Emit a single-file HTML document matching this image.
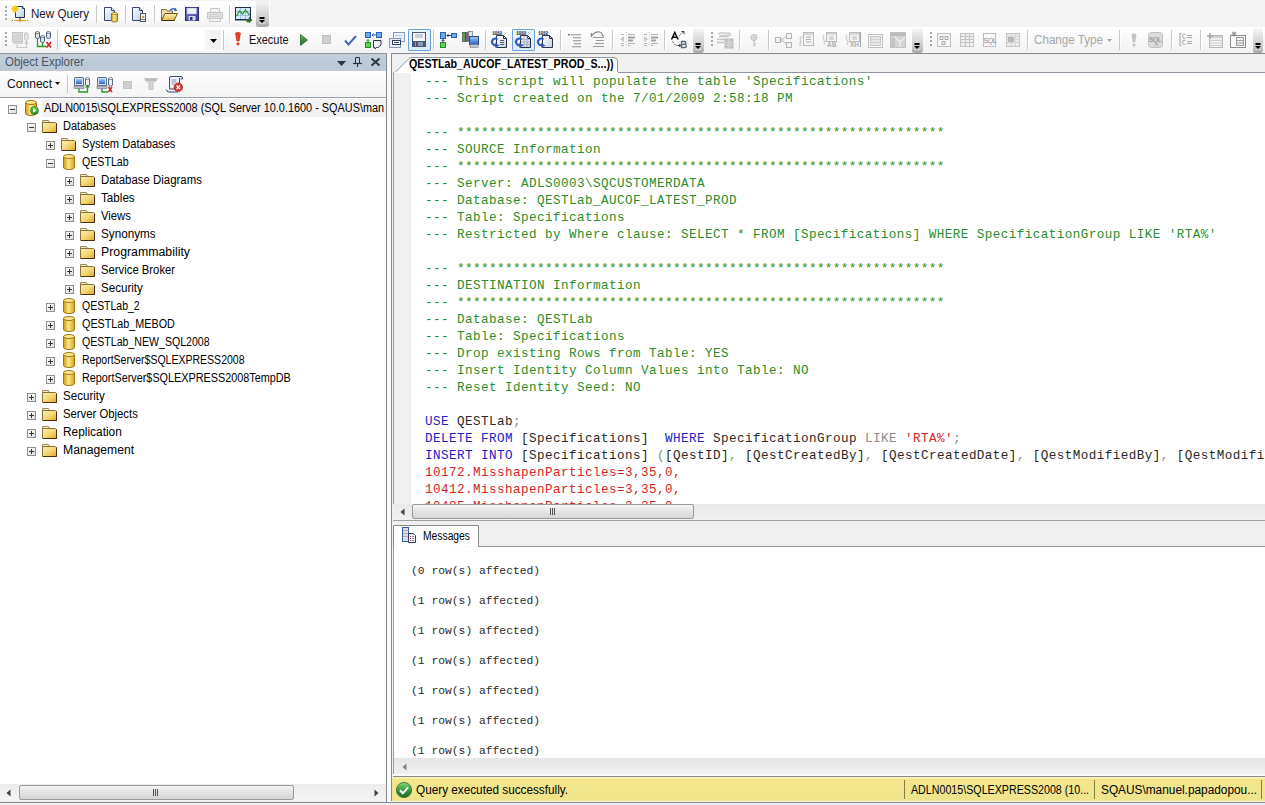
<!DOCTYPE html>
<html><head><meta charset="utf-8">
<style>
*{margin:0;padding:0;box-sizing:border-box}
html,body{width:1265px;height:805px;overflow:hidden;background:#f0f0f0;font-family:"Liberation Sans",sans-serif;font-size:12px;color:#000;position:relative}
.a{position:absolute}
.t{position:absolute;white-space:pre}
svg.a{overflow:visible}
.cl{position:absolute;left:425px;font-family:"Liberation Mono",monospace;font-size:12.6px;letter-spacing:0.44px;height:17px;line-height:17px;white-space:pre;color:#000}
.ml{position:absolute;left:411px;font-family:"Liberation Mono",monospace;font-size:11.333px;height:15px;line-height:15px;white-space:pre;color:#2a2a2a}
</style></head><body>
<svg width="0" height="0" style="position:absolute"><defs>
<linearGradient id="gy" x1="0" x2="1"><stop offset="0" stop-color="#d19a10"/><stop offset=".45" stop-color="#fde68a"/><stop offset="1" stop-color="#d7a31c"/></linearGradient>
<linearGradient id="gf" x1="0" y1="0" x2="0" y2="1"><stop offset="0" stop-color="#fff3c0"/><stop offset="1" stop-color="#e4b840"/></linearGradient><linearGradient id="gf2" x1="0" y1="0" x2="1" y2="1"><stop offset="0" stop-color="#fbf0b8"/><stop offset=".5" stop-color="#f4d878"/><stop offset="1" stop-color="#e0a828"/></linearGradient>
<linearGradient id="gdoc" x1="0" y1="0" x2="1" y2="1"><stop offset="0" stop-color="#ffffff"/><stop offset="1" stop-color="#b8cce8"/></linearGradient><linearGradient id="gfl" x1="0" y1="0" x2="1" y2="1"><stop offset="0" stop-color="#7a7ad8"/><stop offset="1" stop-color="#3a3a98"/></linearGradient><linearGradient id="gpl" x1="0" y1="0" x2="0" y2="1"><stop offset="0" stop-color="#6ab86a"/><stop offset="1" stop-color="#1e6a1e"/></linearGradient><linearGradient id="gchk" x1="0" y1="0" x2="0" y2="1"><stop offset="0" stop-color="#8ad87a"/><stop offset=".5" stop-color="#3a9a3a"/><stop offset="1" stop-color="#1a6a1a"/></linearGradient><linearGradient id="gdoc2" x1="0" y1="0" x2="1" y2="1"><stop offset="0" stop-color="#ffffff"/><stop offset="1" stop-color="#c8d0e0"/></linearGradient><linearGradient id="gb" x1="0" y1="0" x2="0" y2="1"><stop offset="0" stop-color="#9cc8f8"/><stop offset="1" stop-color="#2a62c8"/></linearGradient>
<linearGradient id="gg" x1="0" y1="0" x2="0" y2="1"><stop offset="0" stop-color="#7ed05a"/><stop offset="1" stop-color="#1f8a1f"/></linearGradient>
</defs></svg>
<div class="a" style="left:0px;top:0px;width:1265px;height:27px;background:#f3f3f3"></div>
<div class="a" style="left:0px;top:1px;width:270px;height:26px;background:linear-gradient(#fdfdfd,#fafafa 70%,#f0f0f0);border-radius:0 0 3px 0"></div>
<svg class="a" style="left:5px;top:6px" width="3" height="15" viewBox="0 0 3 15"><rect x="0" y="0" width="2" height="2" fill="#a8a8a8"/><rect x="0" y="4" width="2" height="2" fill="#a8a8a8"/><rect x="0" y="8" width="2" height="2" fill="#a8a8a8"/><rect x="0" y="12" width="2" height="2" fill="#a8a8a8"/></svg>
<svg class="a" style="left:11px;top:5px" width="18" height="17" viewBox="0 0 18 17"><path d="M4.5 1.5 h7 l2 2 v9 h-9z" fill="url(#gdoc)" stroke="#2a3450"/><path d="M11.5 1.5 v2 h2" fill="#fff" stroke="#2a3450"/><circle cx="4" cy="4" r="3" fill="#fde040"/><path d="M4 0v8M0 4h8M1.2 1.2l5.6 5.6M6.8 1.2l-5.6 5.6" stroke="#f4c000" stroke-width=".9"/><path d="M1 15.5 h16" stroke="#806010" stroke-width="1" stroke-dasharray="1 1.5"/><path d="M4 15.5h11" stroke="#e0a020" stroke-width="1.2"/><circle cx="9" cy="15.5" r="1.2" fill="#d09010"/><path d="M9 12.5v2" stroke="#2a3450"/></svg>
<div class="t" style="left:31px;top:6px;font-size:12px;line-height:16px;color:#1a1a2e;transform:scaleX(0.9664);transform-origin:0 0;">New Query</div>
<div class="a" style="left:96px;top:5px;width:1px;height:18px;background:#c8c8c8;border-right:1px solid #fff;width:2px;background-clip:content-box"></div>
<svg class="a" style="left:104px;top:7px" width="15" height="16" viewBox="0 0 15 16"><path d="M.5 .5 h7 l3 3 v10 h-10z" fill="url(#gdoc)" stroke="#3a4668"/><path d="M7.5 .5v3h3" fill="#fff" stroke="#3a4668"/><path d="M7.5 6.5 v7.5 a3 1 0 0 0 6 0 v-7.5" fill="url(#gy)" stroke="#9a7a20"/><ellipse cx="10.5" cy="6.5" rx="3" ry="1" fill="#fde68a" stroke="#9a7a20" stroke-width=".8"/></svg>
<div class="a" style="left:125px;top:5px;width:1px;height:18px;background:#c8c8c8;border-right:1px solid #fff;width:2px;background-clip:content-box"></div>
<svg class="a" style="left:132px;top:7px" width="15" height="16" viewBox="0 0 15 16"><path d="M.5 .5 h7 l3 3 v10 h-10z" fill="url(#gdoc)" stroke="#3a4668"/><path d="M7.5 .5v3h3" fill="#fff" stroke="#3a4668"/><rect x="8.5" y="6.5" width="5" height="8" fill="#f4f4f4" stroke="#505a6a"/><circle cx="11" cy="10" r="1.3" fill="#d0a030"/><path d="M9 12.5h4" stroke="#807050"/></svg>
<div class="a" style="left:154px;top:5px;width:1px;height:18px;background:#c8c8c8;border-right:1px solid #fff;width:2px;background-clip:content-box"></div>
<svg class="a" style="left:161px;top:7px" width="17" height="15" viewBox="0 0 17 15"><path d="M.5 13.5 v-11 h5 l1 1.5 h5 v3" fill="#ecdca8" stroke="#8a7438"/><path d="M.5 13.5 l3.5-7 h12.5 l-3.5 7z" fill="url(#gf)" stroke="#6a5418"/><path d="M1 13.5 h12.5" stroke="#3a2a08"/><path d="M9 3.5 q2.5-3 5.5-1" fill="none" stroke="#3a6ab8" stroke-width="1.4"/><path d="M14 .5 l2.5 3 l-3.5 .8z" fill="#3a6ab8"/></svg>
<svg class="a" style="left:185px;top:7px" width="14" height="14" viewBox="0 0 14 14"><rect x=".5" y=".5" width="13" height="13" fill="url(#gfl)" stroke="#2c2c78"/><rect x="2" y="1" width="9.5" height="6" fill="#eef2ff" stroke="#9aa0d8" stroke-width=".5"/><rect x="3.5" y="9" width="7" height="4.5" fill="#d8dcf0"/><rect x="5" y="10" width="2.5" height="3" fill="#2c2c78"/></svg>
<svg class="a" style="left:207px;top:8px" width="16" height="14" viewBox="0 0 16 14"><path d="M3.5 .5 h9 v4 h-9z" fill="#f4f4f4" stroke="#c8c8c8"/><path d="M.5 4.5 h15 v6 h-15z" fill="#e2e2e2" stroke="#c4c4c4"/><path d="M2 6.5h12M2 8.5h12" stroke="#d0d0d0"/><path d="M2.5 10.5 h11 v3 h-11z" fill="#f4f4f4" stroke="#c8c8c8"/></svg>
<div class="a" style="left:229px;top:5px;width:1px;height:18px;background:#c8c8c8;border-right:1px solid #fff;width:2px;background-clip:content-box"></div>
<svg class="a" style="left:235px;top:7px" width="18" height="16" viewBox="0 0 18 16"><rect x=".5" y=".5" width="15" height="12" fill="#d8ecf8" stroke="#1e2c50"/><path d="M1 4.5h14M1 8.5h14M5.5 1v11M10.5 1v11" stroke="#8ab0d8" stroke-width=".7"/><path d="M1.5 9 l3-5 l3 3 l3-4 l4 5" fill="none" stroke="#2a9a2a" stroke-width="1.3"/><rect x="0" y="12" width="16" height="1.5" fill="#1e2c50"/><path d="M14.5 10 v4.5 h-3 M12 12.5 l2.5 2.5 l2.5-2.5" fill="none" stroke="#2a7a1a" stroke-width="1.4"/></svg>
<div class="a" style="left:256px;top:0px;width:13px;height:27px;background:linear-gradient(rgba(235,235,235,0.3),#e0e0e0 35%,#c8c8c8 75%,#a8a8a8);border-radius:0 0 3px 2px"></div>
<svg class="a" style="left:259px;top:17px" width="6" height="7" viewBox="0 0 6 7"><rect x=".5" y="0" width="5" height="2" fill="#000"/><path d="M0 3 H6 L3 6Z" fill="#000"/><path d="M0 6.5h6" stroke="#fff" stroke-width=".7" opacity=".6"/></svg>
<div class="a" style="left:0px;top:27px;width:1265px;height:26px;background:linear-gradient(#ffffff,#f9f9f9 40%,#f2f2f2);border-top:1px solid #fff"></div>
<svg class="a" style="left:5px;top:32px" width="3" height="15" viewBox="0 0 3 15"><rect x="0" y="0" width="2" height="2" fill="#a8a8a8"/><rect x="0" y="4" width="2" height="2" fill="#a8a8a8"/><rect x="0" y="8" width="2" height="2" fill="#a8a8a8"/><rect x="0" y="12" width="2" height="2" fill="#a8a8a8"/></svg>
<svg class="a" style="left:12px;top:32px" width="17" height="16" viewBox="0 0 17 16"><rect x=".5" y=".5" width="10" height="9" fill="#dcdcdc" stroke="#c4c4c4"/><path d="M2 3h7M2 5h7M2 7h7" stroke="#cacaca"/><rect x="1" y="10" width="10" height="2" fill="#d4d4d4"/><path d="M12.5 1.5v6a1.8 .8 0 0 0 3.6 0v-6" fill="#eaeaea" stroke="#c8c8c8"/><ellipse cx="14.3" cy="1.5" rx="1.8" ry=".8" fill="#f4f4f4" stroke="#c8c8c8"/><path d="M5 12.5v3h9.5v-5M12.8 11.5l1.7-1.8 1.7 1.8" fill="none" stroke="#c8c8c8" stroke-width="1.2"/></svg>
<svg class="a" style="left:35px;top:31px" width="17" height="18" viewBox="0 0 17 18"><path d="M.5 1.5v5a2 .9 0 0 0 4 0v-5" fill="#dde6f0" stroke="#4a5a78"/><ellipse cx="2.5" cy="1.5" rx="2" ry=".9" fill="#fff" stroke="#4a5a78" stroke-width=".8"/><path d="M5.5 5.5v5a2 .9 0 0 0 4 0v-5" fill="#dde6f0" stroke="#4a5a78"/><ellipse cx="7.5" cy="5.5" rx="2" ry=".9" fill="#fff" stroke="#4a5a78" stroke-width=".8"/><path d="M11.5 1.5v5a2 .9 0 0 0 4 0v-5" fill="#dde6f0" stroke="#4a5a78"/><ellipse cx="13.5" cy="1.5" rx="2" ry=".9" fill="#fff" stroke="#4a5a78" stroke-width=".8"/><path d="M2.5 8v7.5h9M7.5 12v3.5" fill="none" stroke="#2a9a2a" stroke-width="1.3"/><path d="M11.5 11l4.5 5.5M16 11l-4.5 5.5" stroke="#e02020" stroke-width="1.7"/></svg>
<div class="a" style="left:57px;top:30px;width:1px;height:20px;background:#c8c8c8;border-right:1px solid #fff;width:2px;background-clip:content-box"></div>
<div class="a" style="left:61px;top:29px;width:161px;height:22px;background:#fff"></div>
<div class="a" style="left:205px;top:30px;width:16px;height:20px;background:linear-gradient(90deg,#f8f8f8,#efefef)"></div>
<svg class="a" style="left:210px;top:39px" width="7" height="4" viewBox="0 0 7 4"><path d="M0 0h7l-3.5 4z" fill="#000"/></svg>
<div class="t" style="left:64px;top:32px;font-size:12px;line-height:16px;color:#000;transform:scaleX(0.8733);transform-origin:0 0;">QESTLab</div>
<div class="a" style="left:223px;top:30px;width:1px;height:20px;background:#c8c8c8;border-right:1px solid #fff;width:2px;background-clip:content-box"></div>
<svg class="a" style="left:234px;top:32px" width="8" height="14" viewBox="0 0 8 14"><path d="M1.5 1 q2.5-1.5 5 0 l-1.3 8 h-2.4z" fill="#e84020" stroke="#b02010" stroke-width=".5"/><circle cx="4" cy="11.8" r="1.6" fill="#e84020"/></svg>
<div class="t" style="left:249px;top:32px;font-size:12px;line-height:16px;color:#111;transform:scaleX(0.9113);transform-origin:0 0;">Execute</div>
<svg class="a" style="left:300px;top:34px" width="8" height="12" viewBox="0 0 8 12"><path d="M.5 .5 L7.5 6 L.5 11.5z" fill="url(#gpl)" stroke="#1e5a1e" stroke-width=".7"/></svg>
<svg class="a" style="left:322px;top:35px" width="9" height="9" viewBox="0 0 9 9"><rect x=".5" y=".5" width="8" height="8" fill="#d0d0d0" stroke="#c0c0c0"/></svg>
<svg class="a" style="left:344px;top:35px" width="13" height="11" viewBox="0 0 13 11"><path d="M1 5.5 l3.5 4 l7.5-8.5" fill="none" stroke="#4a64b0" stroke-width="2"/></svg>
<svg class="a" style="left:365px;top:32px" width="17" height="16" viewBox="0 0 17 16"><rect x=".5" y=".5" width="5" height="5" fill="#6aa8f0" stroke="#2a60b8"/><rect x="11.5" y=".5" width="5" height="5" fill="#6aa8f0" stroke="#2a60b8"/><path d="M7 3h4M8.5 1.5l-1.5 1.5 1.5 1.5" fill="none" stroke="#2a60b8"/><rect x=".5" y="10.5" width="5" height="5" fill="#60d050" stroke="#20902a"/><path d="M3 7.5v3M1.5 9 l1.5-1.5 1.5 1.5" fill="none" stroke="#20902a"/><path d="M8.5 8.5h7.5v4.5l-3 2.5h-1.5l-1.5 1.5v-1.5h-1.5z" fill="#f0f0f4" stroke="#303850"/></svg>
<svg class="a" style="left:389px;top:32px" width="16" height="16" viewBox="0 0 16 16"><rect x="4.5" y=".5" width="11" height="9" fill="#eef2fa" stroke="#8a98b8"/><path d="M6 3.5h8M6 6.5h8" stroke="#c0c8dc"/><rect x=".5" y="6.5" width="11" height="9" fill="#e8edf6" stroke="#8a98b8"/><rect x="3.5" y="8.5" width="8" height="4" fill="#f8f8fc" stroke="#303c60"/><path d="M5 10.5h5" stroke="#303c60"/></svg>
<div class="a" style="left:408px;top:29px;width:23px;height:22px;background:linear-gradient(#eef5fd,#dbe9f9);border:1px solid #6aa0e0;border-radius:1px"></div>
<svg class="a" style="left:412px;top:32px" width="15" height="15" viewBox="0 0 15 15"><rect x=".5" y=".5" width="13" height="14" fill="#f4f6fa" stroke="#48587a"/><path d="M3 3h8M3 5h8" stroke="#9aa4b8"/><rect x="1" y="9" width="12" height="5" fill="#48587a"/><path d="M3 11h1M6 11h5M3 13h1M6 13h5" stroke="#fff" stroke-width=".8"/></svg>
<div class="a" style="left:433px;top:30px;width:1px;height:20px;background:#c8c8c8;border-right:1px solid #fff;width:2px;background-clip:content-box"></div>
<svg class="a" style="left:440px;top:32px" width="17" height="16" viewBox="0 0 17 16"><rect x=".5" y=".5" width="5" height="6" fill="#6aa8f0" stroke="#2a60b8"/><rect x="11.5" y="1.5" width="5" height="4" fill="#6aa8f0" stroke="#2a60b8"/><path d="M7 3.5h4M8.5 2l-1.5 1.5 1.5 1.5" fill="none" stroke="#2a3a60"/><rect x=".5" y="10.5" width="5" height="5" fill="#60d050" stroke="#20902a"/><path d="M3 7.5v3M1.5 9 l1.5-1.5 1.5 1.5" fill="none" stroke="#2a3a60"/></svg>
<svg class="a" style="left:462px;top:31px" width="17" height="17" viewBox="0 0 17 17"><rect x=".5" y="1.5" width="3" height="9" fill="#58a048" stroke="#2a4a2a" stroke-width=".6"/><rect x="3.5" y="1.5" width="3" height="9" fill="#8a5aa0" stroke="#2a4a2a" stroke-width=".6"/><rect x="6.5" y=".5" width="4" height="9" fill="#e0e4ec" stroke="#505870" stroke-width=".6"/><rect x="7.5" y="5.5" width="9" height="8" fill="url(#gb)" stroke="#3a4a70"/><rect x="8" y="13.5" width="8" height="3" fill="#c0c8d4" stroke="#707890" stroke-width=".6"/></svg>
<div class="a" style="left:485px;top:30px;width:1px;height:20px;background:#c8c8c8;border-right:1px solid #fff;width:2px;background-clip:content-box"></div>
<svg class="a" style="left:491px;top:31px" width="17" height="17" viewBox="0 0 17 17"><text x="1" y="4.2" font-family="Liberation Mono" font-size="5" font-weight="bold" fill="#303848" letter-spacing="-.6">1010</text><path d="M5.5 4.5 h7 l3 3 v9 h-10z" fill="url(#gdoc2)" stroke="#2a3248"/><path d="M12.5 4.5v3h3" fill="none" stroke="#2a3248"/><path d="M9 9.5h4M9 11.5h4M9 13.5h4" stroke="#505870"/><path d="M6.5 8.5 a3.3 3.3 0 1 0 -1 5.5" fill="none" stroke="#2a5ac0" stroke-width="2"/><path d="M4 12 l4.5 2.5 -4.5 2.2z" fill="#2a5ac0"/><circle cx="3.8" cy="10.5" r="1" fill="#fff"/></svg>
<div class="a" style="left:512px;top:29px;width:23px;height:22px;background:linear-gradient(#eef5fd,#dbe9f9);border:1px solid #6aa0e0;border-radius:1px"></div>
<svg class="a" style="left:515px;top:31px" width="17" height="17" viewBox="0 0 17 17"><text x="1" y="4.2" font-family="Liberation Mono" font-size="5" font-weight="bold" fill="#303848" letter-spacing="-.6">1010</text><path d="M5.5 4.5 h7 l3 3 v9 h-10z" fill="url(#gdoc2)" stroke="#2a3248"/><path d="M12.5 4.5v3h3" fill="none" stroke="#2a3248"/><path d="M6 8.5h9M6 11h9M6 13.5h9M9 5v11M12 5v11" stroke="#9aa6c0" stroke-width=".8"/><path d="M6.5 8.5 a3.3 3.3 0 1 0 -1 5.5" fill="none" stroke="#2a5ac0" stroke-width="2"/><path d="M4 12 l4.5 2.5 -4.5 2.2z" fill="#2a5ac0"/><circle cx="3.8" cy="10.5" r="1" fill="#fff"/></svg>
<svg class="a" style="left:537px;top:31px" width="17" height="17" viewBox="0 0 17 17"><text x="1" y="4.2" font-family="Liberation Mono" font-size="5" font-weight="bold" fill="#303848" letter-spacing="-.6">1010</text><path d="M5.5 4.5 h7 l3 3 v9 h-10z" fill="url(#gdoc2)" stroke="#2a3248"/><path d="M12.5 4.5v3h3" fill="none" stroke="#2a3248"/><path d="M6.5 8.5 a3.3 3.3 0 1 0 -1 5.5" fill="none" stroke="#2a5ac0" stroke-width="2"/><path d="M4 12 l4.5 2.5 -4.5 2.2z" fill="#2a5ac0"/><circle cx="3.8" cy="10.5" r="1" fill="#fff"/></svg>
<div class="a" style="left:560px;top:30px;width:1px;height:20px;background:#c8c8c8;border-right:1px solid #fff;width:2px;background-clip:content-box"></div>
<svg class="a" style="left:567px;top:33px" width="15" height="15" viewBox="0 0 15 15"><rect x="1" y="1" width="2" height="1.4" fill="#707070"/><path d="M4 1.7h10M6 4.7h8M6 7.7h8M7 10.7h7M5 13.7h9" stroke="#909090" stroke-width="1.1"/></svg>
<svg class="a" style="left:591px;top:31px" width="14" height="17" viewBox="0 0 14 17"><path d="M1 4 l1.5-1 q2-2.5 6-2 q3 .5 3 4 h2" fill="none" stroke="#8a8a8a" stroke-width="1.2"/><path d="M.5 2v4" stroke="#8a8a8a" stroke-width="1.4"/><path d="M2 6.5h11M5 9.5h8M4 12.5h9M2 15.5h11" stroke="#9a9a9a" stroke-width="1.1"/></svg>
<div class="a" style="left:612px;top:30px;width:1px;height:20px;background:#c8c8c8;border-right:1px solid #fff;width:2px;background-clip:content-box"></div>
<svg class="a" style="left:619px;top:31px" width="17" height="17" viewBox="0 0 17 17"><path d="M7.5 1v14" stroke="#c8c8c8" stroke-dasharray="1 2"/><path d="M2 3.5h3M9 3.5h7M9 6.5h7M9 9.5h5M2 12.5h3M9 12.5h7M2 14.5h3M9 14.5h2" stroke="#b4b4b4" stroke-width="1.1"/><path d="M9 6.5h7M9 9.5h5" stroke="#a0a0a0" stroke-width="1.8"/><path d="M1 8 l4-3 v6z" fill="#c8c8c8"/></svg>
<svg class="a" style="left:642px;top:31px" width="17" height="17" viewBox="0 0 17 17"><path d="M7.5 1v14" stroke="#c8c8c8" stroke-dasharray="1 2"/><path d="M2 3.5h3M9 3.5h7M9 6.5h7M9 9.5h5M2 12.5h3M9 12.5h7M2 14.5h3M9 14.5h2" stroke="#b4b4b4" stroke-width="1.1"/><path d="M9 6.5h7M9 9.5h5" stroke="#a0a0a0" stroke-width="1.8"/><path d="M6 8 l-4-3 v6z" fill="#c8c8c8"/></svg>
<div class="a" style="left:664px;top:30px;width:1px;height:20px;background:#c8c8c8;border-right:1px solid #fff;width:2px;background-clip:content-box"></div>
<svg class="a" style="left:670px;top:30px" width="18" height="19" viewBox="0 0 18 19"><path d="M1.5 9.5 L4.8 2.5 L8.1 9.5M2.7 7.2h4.2" fill="none" stroke="#000" stroke-width="1.5"/><path d="M11.5 17.5V11.5h2.6q1.8 0 1.8 1.5 0 1.4-1.8 1.4h-2.6 2.9q2 0 2 1.55 0 1.55-2 1.55z" fill="none" stroke="#56657a" stroke-width="1.3"/><path d="M9.5 5.5 l1 -1 M11.5 3.5 l1-1" stroke="#303030" stroke-width="1"/><path d="M11.5 1.5h2.5v2.5" fill="none" stroke="#303030" stroke-width="1"/><path d="M2.5 11.5 l.8 1.2 M4.3 13.8 l1 1 M6.5 15.5 h1" stroke="#303030" stroke-width="1"/><path d="M8 15.5h2.5M9.3 14l1.5 1.5-1.5 1.5" fill="none" stroke="#303030" stroke-width="1"/></svg>
<div class="a" style="left:693px;top:28px;width:11px;height:25px;background:linear-gradient(rgba(235,235,235,0.3),#e0e0e0 35%,#c8c8c8 75%,#a8a8a8);border-radius:0 0 3px 2px"></div>
<svg class="a" style="left:695px;top:43px" width="6" height="7" viewBox="0 0 6 7"><rect x=".5" y="0" width="5" height="2" fill="#000"/><path d="M0 3 H6 L3 6Z" fill="#000"/><path d="M0 6.5h6" stroke="#fff" stroke-width=".7" opacity=".6"/></svg>
<svg class="a" style="left:711px;top:32px" width="3" height="15" viewBox="0 0 3 15"><rect x="0" y="0" width="2" height="2" fill="#a8a8a8"/><rect x="0" y="4" width="2" height="2" fill="#a8a8a8"/><rect x="0" y="8" width="2" height="2" fill="#a8a8a8"/><rect x="0" y="12" width="2" height="2" fill="#a8a8a8"/></svg>
<svg class="a" style="left:716px;top:32px" width="18" height="17" viewBox="0 0 18 17"><path d="M2 2 q2-2 5-1 h6 q2 0 1.5 2 l-1 1 h-9" fill="#e8e8e8" stroke="#bcbcbc"/><path d="M3 4.5h9M1 7.5h9M1 10.5h7" stroke="#c4c4c4" stroke-width="1.3"/><rect x="9" y="7" width="8" height="9" fill="#c4c4c4" stroke="#b8b8b8"/><path d="M9 10.5h8M9 13h8M13 7v9" stroke="#d8d8d8"/></svg>
<div class="a" style="left:739px;top:30px;width:1px;height:20px;background:#c8c8c8;border-right:1px solid #fff;width:2px;background-clip:content-box"></div>
<svg class="a" style="left:750px;top:34px" width="8" height="13" viewBox="0 0 8 13"><circle cx="4" cy="3.5" r="3" fill="#e0e0e0" stroke="#c0c0c0"/><circle cx="4" cy="3.5" r="1" fill="#c0c0c0"/><path d="M4 6.5v6M4 9.5h2M4 11.5h2" stroke="#c4c4c4" stroke-width="1.2"/></svg>
<div class="a" style="left:768px;top:30px;width:1px;height:20px;background:#c8c8c8;border-right:1px solid #fff;width:2px;background-clip:content-box"></div>
<svg class="a" style="left:775px;top:33px" width="17" height="15" viewBox="0 0 17 15"><rect x=".5" y="4.5" width="5" height="5" fill="#f4f4f4" stroke="#b4b4b4"/><rect x="11.5" y=".5" width="5" height="5" fill="#f4f4f4" stroke="#b4b4b4"/><rect x="11.5" y="9.5" width="5" height="5" fill="#f4f4f4" stroke="#b4b4b4"/><path d="M6 6.5 q3 0 5.5-3.5M6 7.5 q3 0 5.5 4" fill="none" stroke="#b4b4b4"/></svg>
<svg class="a" style="left:799px;top:32px" width="17" height="17" viewBox="0 0 17 17"><rect x="4.5" y=".5" width="10" height="13" fill="#f4f4f4" stroke="#bcbcbc"/><rect x="5" y="1" width="9" height="2" fill="#d8d8d8"/><path d="M7 5h5M7 7.5h5M7 10h5" stroke="#b0b0b0"/><path d="M3 4 q-3 3 -1 6 q-2 2 0 4" fill="none" stroke="#d0d0d0" stroke-width="1.5"/></svg>
<svg class="a" style="left:822px;top:32px" width="17" height="17" viewBox="0 0 17 17"><rect x="4.5" y=".5" width="10" height="9" fill="#f4f4f4" stroke="#bcbcbc"/><rect x="5" y="1" width="9" height="2" fill="#d8d8d8"/><path d="M7 5h5M7 7h5" stroke="#b8b8b8"/><text x="5" y="15" font-family="Liberation Sans" font-size="6.5" font-weight="bold" fill="#b0b0b0">AB</text><path d="M1.5 3 q-1 4 1.5 7 l-1 3" fill="none" stroke="#d4d4d4" stroke-width="1.5"/></svg>
<svg class="a" style="left:845px;top:32px" width="17" height="17" viewBox="0 0 17 17"><rect x="4.5" y=".5" width="10" height="9" fill="#f4f4f4" stroke="#bcbcbc"/><rect x="5" y="1" width="9" height="2" fill="#d8d8d8"/><path d="M7 5h5M7 7h5" stroke="#b8b8b8"/><text x="5" y="15" font-family="Liberation Sans" font-size="6.5" font-weight="bold" fill="#b0b0b0">XH</text><path d="M1.5 3 q-1 4 1.5 7 l-1 3" fill="none" stroke="#d4d4d4" stroke-width="1.5"/><path d="M15.5 0v15" stroke="#a8a8a8"/></svg>
<svg class="a" style="left:868px;top:34px" width="16" height="14" viewBox="0 0 16 14"><rect x=".5" y=".5" width="14" height="13" fill="#fafafa" stroke="#c0c0c0"/><rect x="2.5" y="2.5" width="10" height="9" fill="#e8e8e8" stroke="#c8c8c8"/><path d="M3 5.5h9M3 8.5h9" stroke="#d4d4d4"/></svg>
<svg class="a" style="left:890px;top:32px" width="16" height="16" viewBox="0 0 16 16"><rect x=".5" y=".5" width="15" height="15" fill="#d4d4d4" stroke="#c0c0c0"/><rect x="1" y="1" width="14" height="3" fill="#bcbcbc"/><path d="M5 5 l5 5 l5-5M10 10v5" stroke="#eeeeee" stroke-width="1.3" fill="none"/><rect x="1" y="6" width="4" height="9" fill="#c4c4c4"/></svg>
<div class="a" style="left:912px;top:28px;width:11px;height:25px;background:linear-gradient(rgba(235,235,235,0.3),#e0e0e0 35%,#c8c8c8 75%,#a8a8a8);border-radius:0 0 3px 2px"></div>
<svg class="a" style="left:914px;top:43px" width="6" height="7" viewBox="0 0 6 7"><rect x=".5" y="0" width="5" height="2" fill="#000"/><path d="M0 3 H6 L3 6Z" fill="#000"/><path d="M0 6.5h6" stroke="#fff" stroke-width=".7" opacity=".6"/></svg>
<svg class="a" style="left:930px;top:32px" width="3" height="15" viewBox="0 0 3 15"><rect x="0" y="0" width="2" height="2" fill="#a8a8a8"/><rect x="0" y="4" width="2" height="2" fill="#a8a8a8"/><rect x="0" y="8" width="2" height="2" fill="#a8a8a8"/><rect x="0" y="12" width="2" height="2" fill="#a8a8a8"/></svg>
<svg class="a" style="left:937px;top:33px" width="14" height="14" viewBox="0 0 14 14"><rect x=".5" y=".5" width="13" height="13" fill="#f6f6f6" stroke="#c0c0c0"/><path d="M3 3.5h3v3h-3zM8 3.5h3v3h-3zM5 8.5h3v3h-3z" fill="none" stroke="#a8a8a8"/></svg>
<svg class="a" style="left:960px;top:33px" width="14" height="14" viewBox="0 0 14 14"><rect x=".5" y=".5" width="13" height="13" fill="#f0f0f0" stroke="#c4c4c4"/><path d="M1 3.5h12M1 6.5h12M1 9.5h12M5.5 1v12M9.5 1v12" stroke="#c4c4c4"/></svg>
<svg class="a" style="left:983px;top:33px" width="14" height="14" viewBox="0 0 14 14"><rect x=".5" y=".5" width="12" height="13" fill="#f8f8f8" stroke="#bcbcbc"/><text x=".5" y="10" font-family="Liberation Sans" font-size="7" fill="#888" letter-spacing="-.4">SQL</text></svg>
<svg class="a" style="left:1006px;top:33px" width="14" height="14" viewBox="0 0 14 14"><rect x=".5" y=".5" width="13" height="13" fill="#eaeaea" stroke="#c4c4c4"/><path d="M1 3.5h12M1 6.5h12M1 9.5h12M5.5 1v12M9.5 1v12" stroke="#d4d4d4"/><rect x="2" y="4" width="6" height="5" fill="#b8b8b8"/></svg>
<div class="a" style="left:1027px;top:30px;width:1px;height:20px;background:#c8c8c8;border-right:1px solid #fff;width:2px;background-clip:content-box"></div>
<div class="t" style="left:1034px;top:32px;font-size:12px;line-height:16px;color:#a6a6a6;transform:scaleX(0.9697);transform-origin:0 0;">Change Type</div>
<svg class="a" style="left:1107px;top:39px" width="5" height="3" viewBox="0 0 5 3"><path d="M0 0h5l-2.5 3z" fill="#a6a6a6"/></svg>
<div class="a" style="left:1119px;top:30px;width:1px;height:20px;background:#c8c8c8;border-right:1px solid #fff;width:2px;background-clip:content-box"></div>
<svg class="a" style="left:1131px;top:33px" width="6" height="14" viewBox="0 0 6 14"><path d="M.5 1.5 q2.5-2 5 0 l-1.3 8 h-2.4z" fill="#c4c4c4"/><circle cx="3" cy="12" r="1.6" fill="#c4c4c4"/></svg>
<svg class="a" style="left:1148px;top:32px" width="17" height="16" viewBox="0 0 17 16"><rect x=".5" y=".5" width="14" height="15" rx="3" fill="#dcdcdc" stroke="#c0c0c0"/><text x="1" y="10" font-family="Liberation Sans" font-size="6.5" font-weight="bold" fill="#9a9a9a" letter-spacing="-.3">SQL</text><path d="M6 13h5" stroke="#b8b8b8"/></svg>
<div class="a" style="left:1171px;top:30px;width:1px;height:20px;background:#c8c8c8;border-right:1px solid #fff;width:2px;background-clip:content-box"></div>
<svg class="a" style="left:1178px;top:33px" width="15" height="13" viewBox="0 0 15 13"><path d="M3.5 .5 h-1.5 v12 h1.5" fill="none" stroke="#b0b0b0" stroke-width="1.2"/><path d="M7.5 1.5 a2 2 0 1 0 0 3.5M7.5 7.5 a2 2 0 1 0 0 3.5" fill="none" stroke="#b0b0b0" stroke-width="1.1"/><path d="M9 2.5h5M9 4.5h5M9 8.5h5M9 10.5h5" stroke="#a8a8a8" stroke-width="1.1"/></svg>
<div class="a" style="left:1200px;top:30px;width:1px;height:20px;background:#c8c8c8;border-right:1px solid #fff;width:2px;background-clip:content-box"></div>
<svg class="a" style="left:1207px;top:33px" width="17" height="15" viewBox="0 0 17 15"><rect x="2.5" y="2.5" width="13" height="12" fill="#eeeeee" stroke="#b8b8b8"/><rect x="3" y="3" width="12" height="2" fill="#d0d0d0"/><path d="M3 7.5h12M3 10h12M3 12.5h12" stroke="#d0d0d0"/><path d="M3 0v6M0 3h6" stroke="#a8a8a8" stroke-width="1.6"/></svg>
<svg class="a" style="left:1230px;top:31px" width="17" height="17" viewBox="0 0 17 17"><rect x=".5" y="4.5" width="15" height="12" fill="#fafafa" stroke="#8c8c8c"/><rect x="6.5" y="6.5" width="7" height="8" fill="#f0f0f0" stroke="#9a9a9a"/><path d="M7 9.5h6M7 12h6" stroke="#a0a0a0"/><path d="M4 .5v5M1.5 3h5M2 1l4 4M6 1l-4 4" stroke="#8a8a8a" stroke-width=".9"/></svg>
<div class="a" style="left:1253px;top:28px;width:10px;height:25px;background:linear-gradient(rgba(235,235,235,0.3),#e0e0e0 35%,#c8c8c8 75%,#a8a8a8);border-radius:0 0 3px 2px"></div>
<svg class="a" style="left:1255px;top:43px" width="6" height="7" viewBox="0 0 6 7"><rect x=".5" y="0" width="5" height="2" fill="#000"/><path d="M0 3 H6 L3 6Z" fill="#000"/><path d="M0 6.5h6" stroke="#fff" stroke-width=".7" opacity=".6"/></svg>
<div class="a" style="left:0px;top:53px;width:387px;height:18px;background:linear-gradient(#c6d0da,#bccad8 50%,#bccad8 85%,#c4c8ce);border-top:1px solid #8e97a2;border-right:1px solid #8e97a2"></div>
<div class="t" style="left:5px;top:54px;font-size:12px;line-height:16px;color:#4a5664;transform:scaleX(0.9554);transform-origin:0 0;">Object Explorer</div>
<svg class="a" style="left:337px;top:61px" width="9" height="5" viewBox="0 0 9 5"><path d="M0 0h9l-4.5 5z" fill="#2a3440"/></svg>
<svg class="a" style="left:353px;top:57px" width="9" height="10" viewBox="0 0 9 10"><path d="M2.5 .5h4v6h-4z" fill="none" stroke="#2a3440"/><path d="M0 6.5h9" stroke="#2a3440" stroke-width="1.2"/><path d="M4.5 7v3" stroke="#2a3440"/></svg>
<svg class="a" style="left:371px;top:58px" width="9" height="8" viewBox="0 0 9 8"><path d="M.5 .5l8 7M8.5 .5l-8 7" stroke="#2a3440" stroke-width="1.8"/></svg>
<div class="a" style="left:0px;top:71px;width:387px;height:26px;background:linear-gradient(#fdfdfd,#f4f4f4);border-right:1px solid #8e97a2"></div>
<div class="t" style="left:7px;top:76px;font-size:12px;line-height:16px;color:#111;transform:scaleX(1.0070);transform-origin:0 0;">Connect</div>
<svg class="a" style="left:55px;top:82px" width="5" height="3" viewBox="0 0 5 3"><path d="M0 0h5l-2.5 3z" fill="#111"/></svg>
<div class="a" style="left:67px;top:75px;width:1px;height:18px;background:#c8c8c8"></div>
<svg class="a" style="left:74px;top:77px" width="16" height="16" viewBox="0 0 16 16"><rect x=".5" y=".5" width="9" height="8" rx=".5" fill="#dfe6f0" stroke="#5a6a88"/><rect x="2" y="2" width="6" height="5" fill="url(#gb)"/><rect x="0" y="9" width="10" height="2.5" fill="#b8c0cc" stroke="#6a7488" stroke-width=".6"/><path d="M11.5 1.5 v6.5 a2 1 0 0 0 4 0 v-6.5" fill="#e8eef4" stroke="#5a6a80"/><ellipse cx="13.5" cy="1.5" rx="2" ry="1" fill="#fff" stroke="#5a6a80" stroke-width=".8"/><path d="M5 11.5 v3.5 h8.5 v-5" fill="none" stroke="#2a9a2a" stroke-width="1.4"/><path d="M11 10.5 l2.5-3 2.5 3z" fill="#2a9a2a"/></svg>
<svg class="a" style="left:97px;top:77px" width="16" height="16" viewBox="0 0 16 16"><rect x=".5" y=".5" width="9" height="8" rx=".5" fill="#dfe6f0" stroke="#5a6a88"/><rect x="2" y="2" width="6" height="5" fill="url(#gb)"/><rect x="0" y="9" width="10" height="2.5" fill="#b8c0cc" stroke="#6a7488" stroke-width=".6"/><path d="M11.5 1.5 v6.5 a2 1 0 0 0 4 0 v-6.5" fill="#e8eef4" stroke="#5a6a80"/><ellipse cx="13.5" cy="1.5" rx="2" ry="1" fill="#fff" stroke="#5a6a80" stroke-width=".8"/><path d="M5 11.5 v3.5 h6" fill="none" stroke="#2a9a2a" stroke-width="1.4"/><path d="M11.5 10l3.5 5M15 10l-3.5 5" stroke="#e02020" stroke-width="1.6"/></svg>
<svg class="a" style="left:123px;top:81px" width="9" height="8" viewBox="0 0 9 8"><rect x=".5" y=".5" width="8" height="7" fill="#cfcfcf" stroke="#c4c4c4"/></svg>
<svg class="a" style="left:144px;top:78px" width="14" height="12" viewBox="0 0 14 12"><path d="M.5 .5h13l-4.5 5v6h-4v-6z" fill="#d4d4d4" stroke="#c4c4c4"/><rect x="1" y="1" width="12" height="2" fill="#bdbdbd"/></svg>
<svg class="a" style="left:166px;top:76px" width="17" height="17" viewBox="0 0 17 17"><path d="M3.5 2 q0-1.5 1.5-1.5 h10 q1.5 0 1.5 1.5 v1 h-2" fill="#f4f6fa" stroke="#3a4a70"/><path d="M3.5 2 v11 h10 v-11" fill="#f0f3f8" stroke="#3a4a70"/><path d="M5.5 4h5M5.5 6h5M5.5 8h3" stroke="#8898b8"/><path d="M.5 13.5 q0 2.5 2.5 2.5 h9" fill="#e8ecf4" stroke="#3a4a70"/><circle cx="12.3" cy="11.3" r="4.3" fill="#d03a3a" stroke="#982020" stroke-width=".7"/><path d="M10.5 9.5l3.6 3.6M14.1 9.5l-3.6 3.6" stroke="#fff" stroke-width="1.2"/></svg>
<div class="a" style="left:0px;top:97px;width:387px;height:1px;background:#9aa0a8"></div>
<div class="a" style="left:0px;top:98px;width:386px;height:686px;background:#fff"></div>
<div class="a" style="left:386px;top:53px;width:1px;height:750px;background:#828a94"></div>
<svg width="0" height="0" style="position:absolute"><defs><linearGradient id="gex" x1="0" y1="0" x2="1" y2="1"><stop offset="0" stop-color="#fff"/><stop offset="1" stop-color="#dcdcdc"/></linearGradient></defs></svg>
<div class="a" style="left:42px;top:99px;width:344px;height:18px;background:#f2f2f2"></div>
<svg class="a" style="left:8px;top:105px" width="9" height="9" viewBox="0 0 9 9"><rect x=".5" y=".5" width="8" height="8" fill="url(#gex)" stroke="#8e8f8f"/><path d="M2 4.5h5" stroke="#333"/></svg>
<svg class="a" style="left:25px;top:100px" width="12" height="16" viewBox="0 0 12 16"><path d="M.5 2.5 v11 a5.5 2 0 0 0 11 0 v-11" fill="url(#gy)" stroke="#a07810"/><ellipse cx="6" cy="2.5" rx="5.5" ry="2" fill="#fde68a" stroke="#a07810"/></svg>
<svg class="a" style="left:30px;top:106px" width="9" height="9" viewBox="0 0 9 9"><circle cx="4.5" cy="4.5" r="4" fill="url(#gg)" stroke="#186018" stroke-width=".6"/><path d="M3 2.3 l3.5 2.2 l-3.5 2.2z" fill="#fff"/></svg>
<div class="t" style="left:44px;top:100px;font-size:12px;line-height:17px;color:#000;transform:scaleX(0.9067);transform-origin:0 0;">ADLN0015\SQLEXPRESS2008 (SQL Server 10.0.1600 - SQAUS\man</div>
<svg class="a" style="left:27px;top:123px" width="9" height="9" viewBox="0 0 9 9"><rect x=".5" y=".5" width="8" height="8" fill="url(#gex)" stroke="#8e8f8f"/><path d="M2 4.5h5" stroke="#333"/></svg>
<svg class="a" style="left:42px;top:120px" width="15" height="13" viewBox="0 0 15 13"><path d="M.5 3 v-2.5 h6 l1 2" fill="#f4ecc8" stroke="#9c8a58"/><path d="M.5 2.5 h13 l1 1 v9 h-14z" fill="url(#gf2)" stroke="#8a7038"/><path d="M1 12.5 h13.5 v-9" fill="none" stroke="#4a3010" stroke-width="1"/></svg>
<div class="t" style="left:63px;top:118px;font-size:12px;line-height:17px;color:#000;transform:scaleX(0.9188);transform-origin:0 0;">Databases</div>
<svg class="a" style="left:46px;top:141px" width="9" height="9" viewBox="0 0 9 9"><rect x=".5" y=".5" width="8" height="8" fill="url(#gex)" stroke="#8e8f8f"/><path d="M2 4.5h5" stroke="#333"/><path d="M4.5 2v5" stroke="#333"/></svg>
<svg class="a" style="left:61px;top:138px" width="15" height="13" viewBox="0 0 15 13"><path d="M.5 3 v-2.5 h6 l1 2" fill="#f4ecc8" stroke="#9c8a58"/><path d="M.5 2.5 h13 l1 1 v9 h-14z" fill="url(#gf2)" stroke="#8a7038"/><path d="M1 12.5 h13.5 v-9" fill="none" stroke="#4a3010" stroke-width="1"/></svg>
<div class="t" style="left:82px;top:136px;font-size:12px;line-height:17px;color:#000;transform:scaleX(0.9276);transform-origin:0 0;">System Databases</div>
<svg class="a" style="left:46px;top:159px" width="9" height="9" viewBox="0 0 9 9"><rect x=".5" y=".5" width="8" height="8" fill="url(#gex)" stroke="#8e8f8f"/><path d="M2 4.5h5" stroke="#333"/></svg>
<svg class="a" style="left:63px;top:154px" width="12" height="16" viewBox="0 0 12 16"><path d="M.5 2.5 v11 a5.5 2 0 0 0 11 0 v-11" fill="url(#gy)" stroke="#a07810"/><ellipse cx="6" cy="2.5" rx="5.5" ry="2" fill="#fde68a" stroke="#a07810"/></svg>
<div class="t" style="left:82px;top:154px;font-size:12px;line-height:17px;color:#000;transform:scaleX(0.8847);transform-origin:0 0;">QESTLab</div>
<svg class="a" style="left:65px;top:177px" width="9" height="9" viewBox="0 0 9 9"><rect x=".5" y=".5" width="8" height="8" fill="url(#gex)" stroke="#8e8f8f"/><path d="M2 4.5h5" stroke="#333"/><path d="M4.5 2v5" stroke="#333"/></svg>
<svg class="a" style="left:80px;top:174px" width="15" height="13" viewBox="0 0 15 13"><path d="M.5 3 v-2.5 h6 l1 2" fill="#f4ecc8" stroke="#9c8a58"/><path d="M.5 2.5 h13 l1 1 v9 h-14z" fill="url(#gf2)" stroke="#8a7038"/><path d="M1 12.5 h13.5 v-9" fill="none" stroke="#4a3010" stroke-width="1"/></svg>
<div class="t" style="left:101px;top:172px;font-size:12px;line-height:17px;color:#000;transform:scaleX(0.9515);transform-origin:0 0;">Database Diagrams</div>
<svg class="a" style="left:65px;top:195px" width="9" height="9" viewBox="0 0 9 9"><rect x=".5" y=".5" width="8" height="8" fill="url(#gex)" stroke="#8e8f8f"/><path d="M2 4.5h5" stroke="#333"/><path d="M4.5 2v5" stroke="#333"/></svg>
<svg class="a" style="left:80px;top:192px" width="15" height="13" viewBox="0 0 15 13"><path d="M.5 3 v-2.5 h6 l1 2" fill="#f4ecc8" stroke="#9c8a58"/><path d="M.5 2.5 h13 l1 1 v9 h-14z" fill="url(#gf2)" stroke="#8a7038"/><path d="M1 12.5 h13.5 v-9" fill="none" stroke="#4a3010" stroke-width="1"/></svg>
<div class="t" style="left:101px;top:190px;font-size:12px;line-height:17px;color:#000;transform:scaleX(0.9715);transform-origin:0 0;">Tables</div>
<svg class="a" style="left:65px;top:213px" width="9" height="9" viewBox="0 0 9 9"><rect x=".5" y=".5" width="8" height="8" fill="url(#gex)" stroke="#8e8f8f"/><path d="M2 4.5h5" stroke="#333"/><path d="M4.5 2v5" stroke="#333"/></svg>
<svg class="a" style="left:80px;top:210px" width="15" height="13" viewBox="0 0 15 13"><path d="M.5 3 v-2.5 h6 l1 2" fill="#f4ecc8" stroke="#9c8a58"/><path d="M.5 2.5 h13 l1 1 v9 h-14z" fill="url(#gf2)" stroke="#8a7038"/><path d="M1 12.5 h13.5 v-9" fill="none" stroke="#4a3010" stroke-width="1"/></svg>
<div class="t" style="left:101px;top:208px;font-size:12px;line-height:17px;color:#000;transform:scaleX(0.9403);transform-origin:0 0;">Views</div>
<svg class="a" style="left:65px;top:231px" width="9" height="9" viewBox="0 0 9 9"><rect x=".5" y=".5" width="8" height="8" fill="url(#gex)" stroke="#8e8f8f"/><path d="M2 4.5h5" stroke="#333"/><path d="M4.5 2v5" stroke="#333"/></svg>
<svg class="a" style="left:80px;top:228px" width="15" height="13" viewBox="0 0 15 13"><path d="M.5 3 v-2.5 h6 l1 2" fill="#f4ecc8" stroke="#9c8a58"/><path d="M.5 2.5 h13 l1 1 v9 h-14z" fill="url(#gf2)" stroke="#8a7038"/><path d="M1 12.5 h13.5 v-9" fill="none" stroke="#4a3010" stroke-width="1"/></svg>
<div class="t" style="left:101px;top:226px;font-size:12px;line-height:17px;color:#000;transform:scaleX(0.9765);transform-origin:0 0;">Synonyms</div>
<svg class="a" style="left:65px;top:249px" width="9" height="9" viewBox="0 0 9 9"><rect x=".5" y=".5" width="8" height="8" fill="url(#gex)" stroke="#8e8f8f"/><path d="M2 4.5h5" stroke="#333"/><path d="M4.5 2v5" stroke="#333"/></svg>
<svg class="a" style="left:80px;top:246px" width="15" height="13" viewBox="0 0 15 13"><path d="M.5 3 v-2.5 h6 l1 2" fill="#f4ecc8" stroke="#9c8a58"/><path d="M.5 2.5 h13 l1 1 v9 h-14z" fill="url(#gf2)" stroke="#8a7038"/><path d="M1 12.5 h13.5 v-9" fill="none" stroke="#4a3010" stroke-width="1"/></svg>
<div class="t" style="left:101px;top:244px;font-size:12px;line-height:17px;color:#000;transform:scaleX(1.0265);transform-origin:0 0;">Programmability</div>
<svg class="a" style="left:65px;top:267px" width="9" height="9" viewBox="0 0 9 9"><rect x=".5" y=".5" width="8" height="8" fill="url(#gex)" stroke="#8e8f8f"/><path d="M2 4.5h5" stroke="#333"/><path d="M4.5 2v5" stroke="#333"/></svg>
<svg class="a" style="left:80px;top:264px" width="15" height="13" viewBox="0 0 15 13"><path d="M.5 3 v-2.5 h6 l1 2" fill="#f4ecc8" stroke="#9c8a58"/><path d="M.5 2.5 h13 l1 1 v9 h-14z" fill="url(#gf2)" stroke="#8a7038"/><path d="M1 12.5 h13.5 v-9" fill="none" stroke="#4a3010" stroke-width="1"/></svg>
<div class="t" style="left:101px;top:262px;font-size:12px;line-height:17px;color:#000;transform:scaleX(0.9417);transform-origin:0 0;">Service Broker</div>
<svg class="a" style="left:65px;top:285px" width="9" height="9" viewBox="0 0 9 9"><rect x=".5" y=".5" width="8" height="8" fill="url(#gex)" stroke="#8e8f8f"/><path d="M2 4.5h5" stroke="#333"/><path d="M4.5 2v5" stroke="#333"/></svg>
<svg class="a" style="left:80px;top:282px" width="15" height="13" viewBox="0 0 15 13"><path d="M.5 3 v-2.5 h6 l1 2" fill="#f4ecc8" stroke="#9c8a58"/><path d="M.5 2.5 h13 l1 1 v9 h-14z" fill="url(#gf2)" stroke="#8a7038"/><path d="M1 12.5 h13.5 v-9" fill="none" stroke="#4a3010" stroke-width="1"/></svg>
<div class="t" style="left:101px;top:280px;font-size:12px;line-height:17px;color:#000;transform:scaleX(0.9644);transform-origin:0 0;">Security</div>
<svg class="a" style="left:46px;top:303px" width="9" height="9" viewBox="0 0 9 9"><rect x=".5" y=".5" width="8" height="8" fill="url(#gex)" stroke="#8e8f8f"/><path d="M2 4.5h5" stroke="#333"/><path d="M4.5 2v5" stroke="#333"/></svg>
<svg class="a" style="left:63px;top:298px" width="12" height="16" viewBox="0 0 12 16"><path d="M.5 2.5 v11 a5.5 2 0 0 0 11 0 v-11" fill="url(#gy)" stroke="#a07810"/><ellipse cx="6" cy="2.5" rx="5.5" ry="2" fill="#fde68a" stroke="#a07810"/></svg>
<div class="t" style="left:82px;top:298px;font-size:12px;line-height:17px;color:#000;transform:scaleX(0.8725);transform-origin:0 0;">QESTLab_2</div>
<svg class="a" style="left:46px;top:321px" width="9" height="9" viewBox="0 0 9 9"><rect x=".5" y=".5" width="8" height="8" fill="url(#gex)" stroke="#8e8f8f"/><path d="M2 4.5h5" stroke="#333"/><path d="M4.5 2v5" stroke="#333"/></svg>
<svg class="a" style="left:63px;top:316px" width="12" height="16" viewBox="0 0 12 16"><path d="M.5 2.5 v11 a5.5 2 0 0 0 11 0 v-11" fill="url(#gy)" stroke="#a07810"/><ellipse cx="6" cy="2.5" rx="5.5" ry="2" fill="#fde68a" stroke="#a07810"/></svg>
<div class="t" style="left:82px;top:316px;font-size:12px;line-height:17px;color:#000;transform:scaleX(0.8980);transform-origin:0 0;">QESTLab_MEBOD</div>
<svg class="a" style="left:46px;top:339px" width="9" height="9" viewBox="0 0 9 9"><rect x=".5" y=".5" width="8" height="8" fill="url(#gex)" stroke="#8e8f8f"/><path d="M2 4.5h5" stroke="#333"/><path d="M4.5 2v5" stroke="#333"/></svg>
<svg class="a" style="left:63px;top:334px" width="12" height="16" viewBox="0 0 12 16"><path d="M.5 2.5 v11 a5.5 2 0 0 0 11 0 v-11" fill="url(#gy)" stroke="#a07810"/><ellipse cx="6" cy="2.5" rx="5.5" ry="2" fill="#fde68a" stroke="#a07810"/></svg>
<div class="t" style="left:82px;top:334px;font-size:12px;line-height:17px;color:#000;transform:scaleX(0.8818);transform-origin:0 0;">QESTLab_NEW_SQL2008</div>
<svg class="a" style="left:46px;top:357px" width="9" height="9" viewBox="0 0 9 9"><rect x=".5" y=".5" width="8" height="8" fill="url(#gex)" stroke="#8e8f8f"/><path d="M2 4.5h5" stroke="#333"/><path d="M4.5 2v5" stroke="#333"/></svg>
<svg class="a" style="left:63px;top:352px" width="12" height="16" viewBox="0 0 12 16"><path d="M.5 2.5 v11 a5.5 2 0 0 0 11 0 v-11" fill="url(#gy)" stroke="#a07810"/><ellipse cx="6" cy="2.5" rx="5.5" ry="2" fill="#fde68a" stroke="#a07810"/></svg>
<div class="t" style="left:82px;top:352px;font-size:12px;line-height:17px;color:#000;transform:scaleX(0.8765);transform-origin:0 0;">ReportServer$SQLEXPRESS2008</div>
<svg class="a" style="left:46px;top:375px" width="9" height="9" viewBox="0 0 9 9"><rect x=".5" y=".5" width="8" height="8" fill="url(#gex)" stroke="#8e8f8f"/><path d="M2 4.5h5" stroke="#333"/><path d="M4.5 2v5" stroke="#333"/></svg>
<svg class="a" style="left:63px;top:370px" width="12" height="16" viewBox="0 0 12 16"><path d="M.5 2.5 v11 a5.5 2 0 0 0 11 0 v-11" fill="url(#gy)" stroke="#a07810"/><ellipse cx="6" cy="2.5" rx="5.5" ry="2" fill="#fde68a" stroke="#a07810"/></svg>
<div class="t" style="left:82px;top:370px;font-size:12px;line-height:17px;color:#000;transform:scaleX(0.9019);transform-origin:0 0;">ReportServer$SQLEXPRESS2008TempDB</div>
<svg class="a" style="left:27px;top:393px" width="9" height="9" viewBox="0 0 9 9"><rect x=".5" y=".5" width="8" height="8" fill="url(#gex)" stroke="#8e8f8f"/><path d="M2 4.5h5" stroke="#333"/><path d="M4.5 2v5" stroke="#333"/></svg>
<svg class="a" style="left:42px;top:390px" width="15" height="13" viewBox="0 0 15 13"><path d="M.5 3 v-2.5 h6 l1 2" fill="#f4ecc8" stroke="#9c8a58"/><path d="M.5 2.5 h13 l1 1 v9 h-14z" fill="url(#gf2)" stroke="#8a7038"/><path d="M1 12.5 h13.5 v-9" fill="none" stroke="#4a3010" stroke-width="1"/></svg>
<div class="t" style="left:63px;top:388px;font-size:12px;line-height:17px;color:#000;transform:scaleX(0.9644);transform-origin:0 0;">Security</div>
<svg class="a" style="left:27px;top:411px" width="9" height="9" viewBox="0 0 9 9"><rect x=".5" y=".5" width="8" height="8" fill="url(#gex)" stroke="#8e8f8f"/><path d="M2 4.5h5" stroke="#333"/><path d="M4.5 2v5" stroke="#333"/></svg>
<svg class="a" style="left:42px;top:408px" width="15" height="13" viewBox="0 0 15 13"><path d="M.5 3 v-2.5 h6 l1 2" fill="#f4ecc8" stroke="#9c8a58"/><path d="M.5 2.5 h13 l1 1 v9 h-14z" fill="url(#gf2)" stroke="#8a7038"/><path d="M1 12.5 h13.5 v-9" fill="none" stroke="#4a3010" stroke-width="1"/></svg>
<div class="t" style="left:63px;top:406px;font-size:12px;line-height:17px;color:#000;transform:scaleX(0.9427);transform-origin:0 0;">Server Objects</div>
<svg class="a" style="left:27px;top:429px" width="9" height="9" viewBox="0 0 9 9"><rect x=".5" y=".5" width="8" height="8" fill="url(#gex)" stroke="#8e8f8f"/><path d="M2 4.5h5" stroke="#333"/><path d="M4.5 2v5" stroke="#333"/></svg>
<svg class="a" style="left:42px;top:426px" width="15" height="13" viewBox="0 0 15 13"><path d="M.5 3 v-2.5 h6 l1 2" fill="#f4ecc8" stroke="#9c8a58"/><path d="M.5 2.5 h13 l1 1 v9 h-14z" fill="url(#gf2)" stroke="#8a7038"/><path d="M1 12.5 h13.5 v-9" fill="none" stroke="#4a3010" stroke-width="1"/></svg>
<div class="t" style="left:63px;top:424px;font-size:12px;line-height:17px;color:#000;transform:scaleX(0.9903);transform-origin:0 0;">Replication</div>
<svg class="a" style="left:27px;top:447px" width="9" height="9" viewBox="0 0 9 9"><rect x=".5" y=".5" width="8" height="8" fill="url(#gex)" stroke="#8e8f8f"/><path d="M2 4.5h5" stroke="#333"/><path d="M4.5 2v5" stroke="#333"/></svg>
<svg class="a" style="left:42px;top:444px" width="15" height="13" viewBox="0 0 15 13"><path d="M.5 3 v-2.5 h6 l1 2" fill="#f4ecc8" stroke="#9c8a58"/><path d="M.5 2.5 h13 l1 1 v9 h-14z" fill="url(#gf2)" stroke="#8a7038"/><path d="M1 12.5 h13.5 v-9" fill="none" stroke="#4a3010" stroke-width="1"/></svg>
<div class="t" style="left:63px;top:442px;font-size:12px;line-height:17px;color:#000;transform:scaleX(1.0153);transform-origin:0 0;">Management</div>
<div class="a" style="left:387px;top:53px;width:4px;height:749px;background:#f9f9f9"></div>
<div class="a" style="left:0px;top:784px;width:386px;height:17px;background:linear-gradient(#ececec,#f4f4f4)"></div>
<svg class="a" style="left:6px;top:789px" width="5" height="8" viewBox="0 0 5 8"><path d="M4.5 .5 v7 l-4-3.5z" fill="#404040"/></svg>
<svg class="a" style="left:374px;top:789px" width="5" height="8" viewBox="0 0 5 8"><path d="M.5 .5 v7 l4-3.5z" fill="#404040"/></svg>
<div class="a" style="left:19px;top:785px;width:275px;height:15px;background:linear-gradient(#f4f4f4,#e2e2e2 50%,#d4d4d4);border:1px solid #9a9a9a;border-radius:2px"></div>
<svg class="a" style="left:152px;top:789px" width="7" height="7" viewBox="0 0 7 7"><path d="M1.5 0v7M3.5 0v7M5.5 0v7" stroke="#505050"/></svg>
<div class="a" style="left:391px;top:53px;width:874px;height:750px;background:#f0f0f0;border-left:1px solid #828a94;border-top:1px solid #828a94"></div>
<svg class="a" style="left:392px;top:54px" width="240" height="19" viewBox="0 0 240 19"><path d="M3 18.5 L17 4.5 Q18 3.5 20 3.5 H222 Q225.5 3.5 225.5 7 V18.5" fill="#fff" stroke="#8e97a2"/></svg>
<div class="t" style="left:409px;top:56px;font-size:12px;line-height:16px;color:#000;font-weight:bold;transform:scaleX(0.8900);transform-origin:0 0;">QESTLab_AUCOF_LATEST_PROD_S...))</div>
<div class="a" style="left:393px;top:72px;width:872px;height:432px;background:#fff;border-left:1px solid #9aa0a8"></div>
<div class="a" style="left:618px;top:72px;width:647px;height:1px;background:#8e97a2"></div>
<div class="a" style="left:394px;top:73px;width:17px;height:431px;background:#f0f0f0"></div>
<div class="a" style="left:393px;top:72px;width:872px;height:432px;overflow:hidden"><div class="a" style="left:-393px;top:-72px;width:1265px;height:600px"><div class="cl" style="top:74px"><span style="color:#2a8c2a">--- This script will populate the table &#x27;Specifications&#x27;</span></div><div class="cl" style="top:91px"><span style="color:#2a8c2a">--- Script created on the 7/01/2009 2:58:18 PM</span></div><div class="cl" style="top:108px"></div><div class="cl" style="top:125px"><span style="color:#2a8c2a">--- *************************************************************</span></div><div class="cl" style="top:142px"><span style="color:#2a8c2a">--- SOURCE Information</span></div><div class="cl" style="top:159px"><span style="color:#2a8c2a">--- *************************************************************</span></div><div class="cl" style="top:176px"><span style="color:#2a8c2a">--- Server: ADLS0003\SQCUSTOMERDATA</span></div><div class="cl" style="top:193px"><span style="color:#2a8c2a">--- Database: QESTLab_AUCOF_LATEST_PROD</span></div><div class="cl" style="top:210px"><span style="color:#2a8c2a">--- Table: Specifications</span></div><div class="cl" style="top:227px"><span style="color:#2a8c2a">--- Restricted by Where clause: SELECT * FROM [Specifications] WHERE SpecificationGroup LIKE &#x27;RTA%&#x27;</span></div><div class="cl" style="top:244px"></div><div class="cl" style="top:261px"><span style="color:#2a8c2a">--- *************************************************************</span></div><div class="cl" style="top:278px"><span style="color:#2a8c2a">--- DESTINATION Information</span></div><div class="cl" style="top:295px"><span style="color:#2a8c2a">--- *************************************************************</span></div><div class="cl" style="top:312px"><span style="color:#2a8c2a">--- Database: QESTLab</span></div><div class="cl" style="top:329px"><span style="color:#2a8c2a">--- Table: Specifications</span></div><div class="cl" style="top:346px"><span style="color:#2a8c2a">--- Drop existing Rows from Table: YES</span></div><div class="cl" style="top:363px"><span style="color:#2a8c2a">--- Insert Identity Column Values into Table: NO</span></div><div class="cl" style="top:380px"><span style="color:#2a8c2a">--- Reset Identity Seed: NO</span></div><div class="cl" style="top:397px"></div><div class="cl" style="top:414px"><span style="color:#2020c8">USE</span><span style="color:#282828"> QESTLab</span><span style="color:#8c8c8c">;</span></div><div class="cl" style="top:431px"><span style="color:#2020c8">DELETE FROM</span><span style="color:#282828"> [Specifications]  </span><span style="color:#2020c8">WHERE</span><span style="color:#282828"> SpecificationGroup </span><span style="color:#8c8c8c">LIKE</span><span style="color:#282828"> </span><span style="color:#d42424">&#x27;RTA%&#x27;</span><span style="color:#8c8c8c">;</span></div><div class="cl" style="top:448px"><span style="color:#2020c8">INSERT INTO</span><span style="color:#282828"> [Specifications] </span><span style="color:#8c8c8c">(</span><span style="color:#282828">[QestID]</span><span style="color:#8c8c8c">,</span><span style="color:#282828"> [QestCreatedBy]</span><span style="color:#8c8c8c">,</span><span style="color:#282828"> [QestCreatedDate]</span><span style="color:#8c8c8c">,</span><span style="color:#282828"> [QestModifiedBy]</span><span style="color:#8c8c8c">,</span><span style="color:#282828"> [QestModifiedDate]</span><span style="color:#8c8c8c">,</span><span style="color:#282828"> [QestOwnerLabNo]</span></div><div class="cl" style="top:465px"><span style="color:#d42424">10172.MisshapenParticles=3,35,0,</span></div><div class="cl" style="top:482px"><span style="color:#d42424">10412.MisshapenParticles=3,35,0,</span></div><div class="cl" style="top:499px"><span style="color:#d42424">10485.MisshapenParticles=3,35,0,</span></div></div></div>
<div class="a" style="left:394px;top:504px;width:871px;height:16px;background:linear-gradient(#e8e8e8,#f0f0f0)"></div>
<div class="a" style="left:393px;top:520px;width:872px;height:1px;background:#a0a0a0"></div>
<svg class="a" style="left:400px;top:508px" width="5" height="8" viewBox="0 0 5 8"><path d="M4.5 .5 v7 l-4-3.5z" fill="#404040"/></svg>
<div class="a" style="left:412px;top:504px;width:282px;height:15px;background:linear-gradient(#f6f6f6,#e4e4e4 50%,#d6d6d6);border:1px solid #9a9a9a;border-radius:2px"></div>
<svg class="a" style="left:549px;top:508px" width="7" height="7" viewBox="0 0 7 7"><path d="M1.5 0v7M3.5 0v7M5.5 0v7" stroke="#505050"/></svg>
<div class="a" style="left:393px;top:521px;width:872px;height:4px;background:#f0f0f0"></div>
<div class="a" style="left:478px;top:546px;width:787px;height:1px;background:#8e97a2"></div>
<svg class="a" style="left:393px;top:525px" width="87" height="23" viewBox="0 0 87 23"><path d="M.5 22.5 V.5 H85.5 V21.5" fill="#fff" stroke="#8a8a8a"/></svg>
<svg class="a" style="left:402px;top:527px" width="14" height="16" viewBox="0 0 14 16"><rect x=".5" y=".5" width="6" height="14" fill="#cfe0f4" stroke="#3c5a9a"/><path d="M1 3.5h5M1 6.5h5M1 9.5h5" stroke="#e09a9a"/><path d="M6.5 6.5h5l2 2v7h-7z" fill="#f6f6f6" stroke="#2a3a6a"/><path d="M8 9.5h1M8 11.5h1M8 13.5h1" stroke="#c03030"/><path d="M10 9.5h2M10 11.5h2M10 13.5h2" stroke="#8090a8"/></svg>
<div class="t" style="left:423px;top:528px;font-size:12px;line-height:17px;color:#000;transform:scaleX(0.8594);transform-origin:0 0;">Messages</div>
<div class="a" style="left:393px;top:547px;width:872px;height:230px;background:#fff;border-left:1px solid #9aa0a8"></div>
<div class="ml" style="top:564px">(0 row(s) affected)</div>
<div class="ml" style="top:594px">(1 row(s) affected)</div>
<div class="ml" style="top:624px">(1 row(s) affected)</div>
<div class="ml" style="top:654px">(1 row(s) affected)</div>
<div class="ml" style="top:684px">(1 row(s) affected)</div>
<div class="ml" style="top:714px">(1 row(s) affected)</div>
<div class="ml" style="top:744px">(1 row(s) affected)</div>
<div class="a" style="left:394px;top:758px;width:871px;height:17px;background:linear-gradient(#e6e6e6,#f0f0f0)"></div>
<svg class="a" style="left:402px;top:763px" width="5" height="8" viewBox="0 0 5 8"><path d="M4.5 .5 v7 l-4-3.5z" fill="#808080"/></svg>
<div class="a" style="left:393px;top:774px;width:872px;height:2px;background:#fafafa"></div>
<div class="a" style="left:393px;top:776px;width:872px;height:1px;background:#8a8a8a"></div>
<div class="a" style="left:392px;top:777px;width:873px;height:24px;background:linear-gradient(#fbf6d0,#f1e68d 2px,#efe48a)"></div>
<div class="a" style="left:391px;top:801px;width:874px;height:1px;background:#f6f6f0"></div>
<svg class="a" style="left:396px;top:782px" width="16" height="16" viewBox="0 0 16 16"><circle cx="8" cy="8" r="7.6" fill="url(#gchk)" stroke="#2a6a2a" stroke-width=".8"/><path d="M4 8.3 l2.8 3 l5.2-5.8" fill="none" stroke="#fff" stroke-width="2"/></svg>
<div class="t" style="left:416px;top:782px;font-size:12px;line-height:17px;color:#000;transform:scaleX(0.9798);transform-origin:0 0;">Query executed successfully.</div>
<div class="a" style="left:904px;top:780px;width:1px;height:19px;background:#857a40"></div>
<div class="t" style="left:911px;top:782px;font-size:12px;line-height:17px;color:#000;transform:scaleX(0.8898);transform-origin:0 0;">ADLN0015\SQLEXPRESS2008 (10...</div>
<div class="a" style="left:1094px;top:780px;width:1px;height:19px;background:#857a40"></div>
<div class="t" style="left:1101px;top:782px;font-size:12px;line-height:17px;color:#000;transform:scaleX(0.9870);transform-origin:0 0;">SQAUS\manuel.papadopou...</div>
<div class="a" style="left:1261px;top:780px;width:1px;height:19px;background:#857a40"></div>
<div class="a" style="left:0px;top:802px;width:1265px;height:1px;background:#8a8a8a"></div>
<div class="a" style="left:0px;top:803px;width:1265px;height:2px;background:#f0f0f0"></div>
</body></html>
